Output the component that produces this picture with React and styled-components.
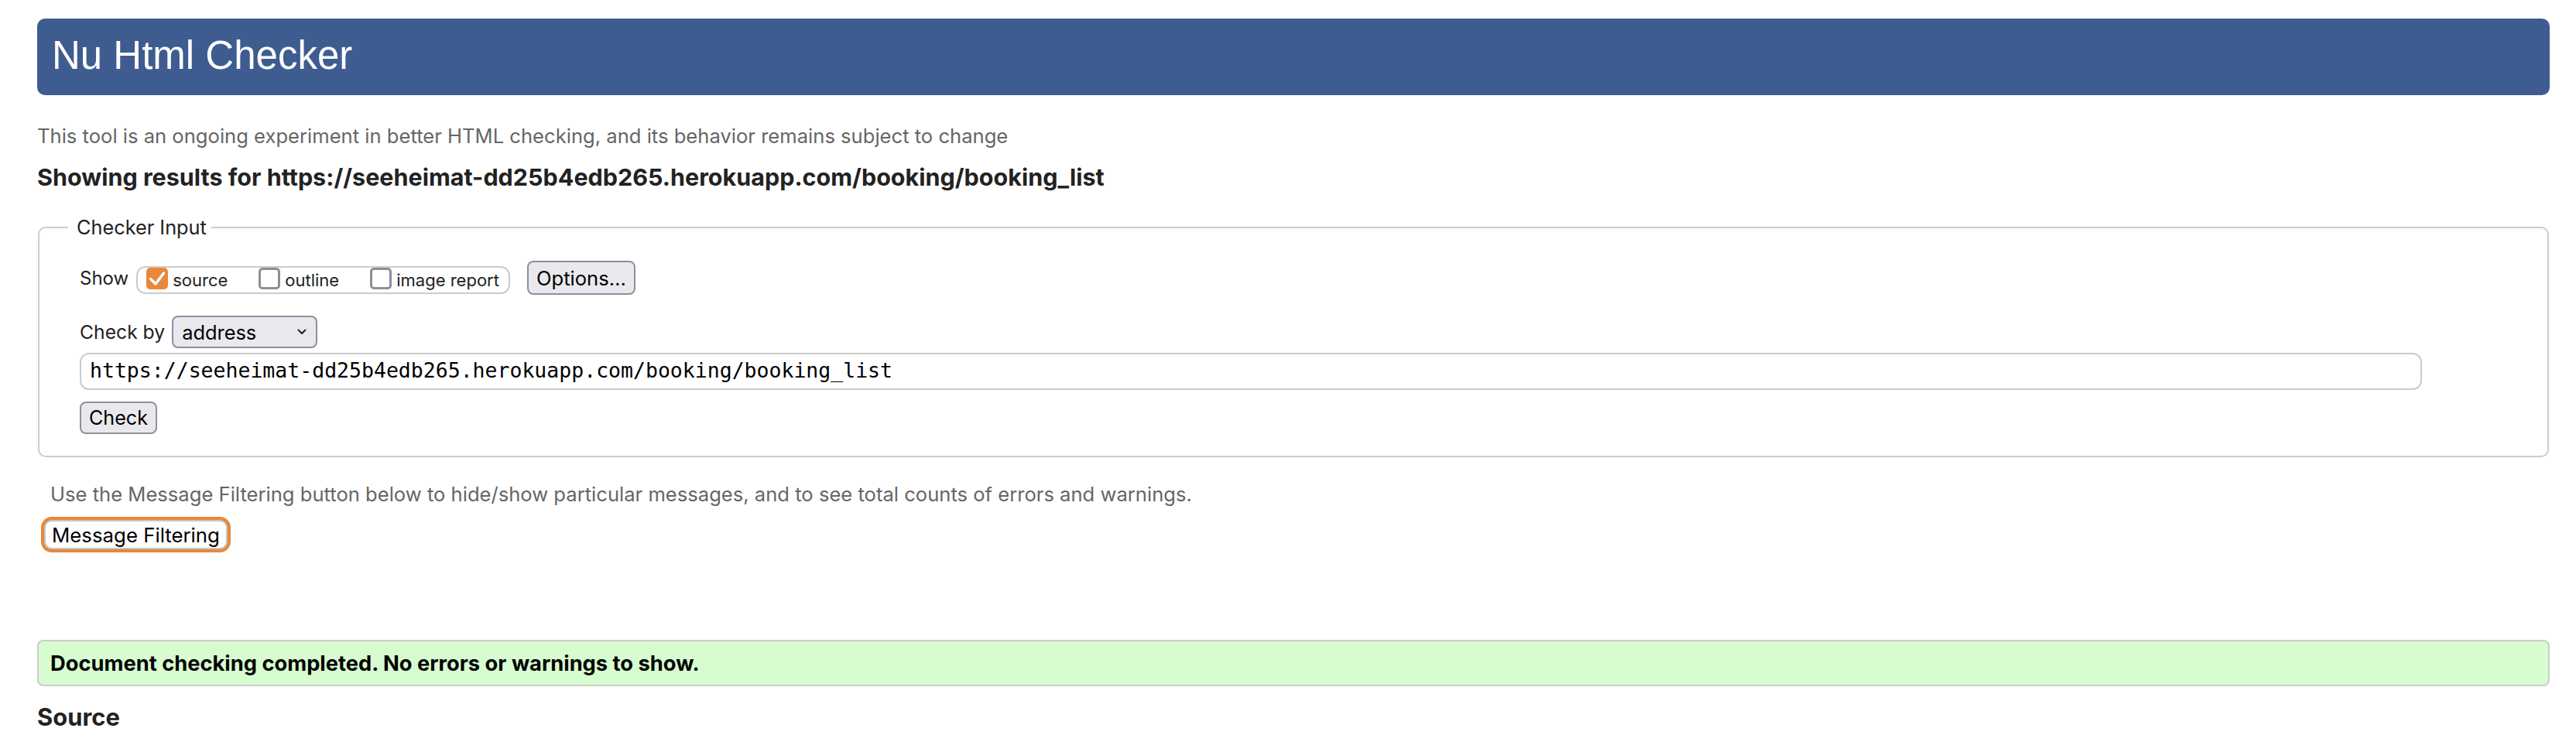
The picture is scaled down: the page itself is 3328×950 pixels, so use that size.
import React from "react";
import styled, { createGlobalStyle } from "styled-components";

const SANS = `"Liberation Sans", Arial, Helvetica, sans-serif`;
const UI = `Inter, "Liberation Sans", Arial, sans-serif`;
const MONO = `"DejaVu Sans Mono", "Liberation Mono", monospace`;
const URL = "https://seeheimat-dd25b4edb265.herokuapp.com/booking/booking_list";

const GlobalStyle = createGlobalStyle`
  html, body { margin: 0; padding: 0; background: #fff; }
  body { font-family: ${UI}; color: #222; }
`;

const Page = styled.div`
  padding: 24px 34px 0 48px;
`;

const Banner = styled.header`
  height: 99px;
  box-sizing: border-box;
  background: #3e5c8f;
  border-radius: 10px;
  display: flex;
  align-items: center;
  padding: 0 19px 4px;
`;

const Title = styled.h1`
  margin: 0;
  font-family: ${SANS};
  font-size: 51px;
  line-height: 1;
  font-weight: 400;
  color: #fff;
`;

const Lead = styled.p`
  margin: ${(p) => p.$top}px 0 0;
  padding-left: ${(p) => p.$indent || 0}px;
  font-family: ${UI};
  font-size: 25.6px;
  line-height: 30px;
  color: #666;
`;

const Heading = styled.h2`
  margin: ${(p) => p.$top}px 0 0;
  font-family: ${UI};
  font-size: ${(p) => p.$size}px;
  line-height: 36px;
  font-weight: 700;
  color: #222;
`;

const Fieldset = styled.fieldset`
  margin: 32px 1px 0 1px;
  border: 2px solid #ccc;
  border-radius: 10px;
  padding: 28px 52px 28px;
  min-width: 0;
`;

const Legend = styled.legend`
  margin-left: -15px;
  padding: 0 6px 0 11px;
  font-family: ${UI};
  font-size: 25.3px;
  line-height: 30px;
  color: #222;
`;

const Row = styled.div`
  display: flex;
  align-items: center;
  margin-top: ${(p) => p.$top || 0}px;
`;

const FieldLabel = styled.span`
  font-family: ${UI};
  font-size: ${(p) => p.$size}px;
  color: #222;
  margin-right: ${(p) => p.$gap}px;
`;

const ToggleGroup = styled.div`
  display: inline-flex;
  align-items: center;
  align-self: flex-end;
  height: 36px;
  margin-bottom: 1px;
  box-sizing: border-box;
  border: 2px solid #ccc;
  border-radius: 12px;
  padding: 0 12px 0 11px;
`;

const ToggleItem = styled.label`
  display: inline-flex;
  align-items: center;
  gap: 6px;
  margin-right: ${(p) => (p.$last ? 0 : 40)}px;
`;

const Tick = styled.span`
  width: 28px;
  height: 28px;
  box-sizing: border-box;
  border-radius: 5px;
  display: inline-flex;
  align-items: center;
  justify-content: center;
  flex-shrink: 0;
  margin-bottom: 4px;
  background: ${(p) => (p.$on ? "#e8883a" : "#fff")};
  border: ${(p) => (p.$on ? "none" : "3px solid #8e8e99")};
`;

const ToggleText = styled.span`
  font-family: ${UI};
  font-size: 22px;
  color: #222;
`;

const GreyButton = styled.button`
  display: inline-flex;
  align-items: center;
  height: ${(p) => p.$h}px;
  margin-left: ${(p) => p.$left || 0}px;
  box-sizing: border-box;
  padding: 0 10px;
  background: #e9e9ed;
  border: 2px solid #8f8f9d;
  border-radius: 8px;
  font-family: ${UI};
  font-size: ${(p) => p.$size}px;
  color: #000;
`;

const SelectBox = styled.div`
  width: 188px;
  height: 42px;
  box-sizing: border-box;
  display: flex;
  align-items: center;
  justify-content: space-between;
  padding: 0 12px 0 11px;
  background: #e9e9ed;
  border: 2px solid #8f8f9d;
  border-radius: 8px;
  font-family: ${UI};
  font-size: 25.4px;
  color: #000;
`;

const UrlInput = styled.input`
  display: block;
  width: calc(100% - 110px);
  height: 48px;
  margin-top: 6px;
  box-sizing: border-box;
  padding: 0 11px 4px;
  border: 2px solid #ccc;
  border-radius: 12px;
  background: #fff;
  font-family: ${MONO};
  font-size: 26.5px;
  color: #000;
  outline: none;
`;

const ButtonRow = styled.div`
  margin-top: 15px;
`;

const FocusButton = styled.button`
  display: inline-flex;
  align-items: center;
  height: 38px;
  margin: 18px 0 0 9px;
  box-sizing: border-box;
  padding: 0 8px;
  background: #fff;
  border: 2px solid #c6c6c6;
  border-radius: 10px;
  box-shadow: 0 0 0 4px #e8883a;
  font-family: ${UI};
  font-size: 25.8px;
  color: #000;
`;

const SuccessBox = styled.div`
  margin-top: 117px;
  height: 60px;
  box-sizing: border-box;
  display: flex;
  align-items: center;
  padding: 0 15px;
  background: #d7fcd0;
  border: 2px solid #ccc;
  border-radius: 8px;
  font-family: ${UI};
  font-size: 27.3px;
  font-weight: 700;
  color: #000;
`;

function CheckMark() {
  return (
    <svg width="28" height="28" viewBox="0 0 28 28">
      <path
        d="M5.5 14.5 L12 21 L22.5 7"
        fill="none"
        stroke="#fff"
        strokeWidth="3.4"
        strokeLinecap="round"
        strokeLinejoin="round"
      />
    </svg>
  );
}

function Chevron() {
  return (
    <svg width="12" height="8" viewBox="0 0 12 8">
      <polyline
        points="1.5,1.5 6,6 10.5,1.5"
        fill="none"
        stroke="#222"
        strokeWidth="2"
        strokeLinecap="round"
        strokeLinejoin="round"
      />
    </svg>
  );
}

const toggles = [
  { label: "source", on: true },
  { label: "outline", on: false },
  { label: "image report", on: false },
];

export default function App() {
  return (
    <>
      <GlobalStyle />
      <Page>
        <Banner>
          <Title>Nu Html Checker</Title>
        </Banner>
        <Lead $top={38}>
          This tool is an ongoing experiment in better HTML checking, and its behavior remains subject to change
        </Lead>
        <Heading $top={20} $size={30.5}>
          Showing results for {URL}
        </Heading>

        <Fieldset>
          <Legend>Checker Input</Legend>
          <Row>
            <FieldLabel $size={24} $gap={10}>
              Show
            </FieldLabel>
            <ToggleGroup>
              {toggles.map((t, i) => (
                <ToggleItem key={t.label} $last={i === toggles.length - 1}>
                  <Tick $on={t.on}>{t.on && <CheckMark />}</Tick>
                  <ToggleText>{t.label}</ToggleText>
                </ToggleItem>
              ))}
            </ToggleGroup>
            <GreyButton $h={44} $left={22} $size={25.6}>
              Options…
            </GreyButton>
          </Row>
          <Row $top={27}>
            <FieldLabel $size={24.7} $gap={9}>
              Check by
            </FieldLabel>
            <SelectBox>
              <span>address</span>
              <Chevron />
            </SelectBox>
          </Row>
          <UrlInput type="url" readOnly value={URL} />
          <ButtonRow>
            <GreyButton $h={42} $size={25.1}>
              Check
            </GreyButton>
          </ButtonRow>
        </Fieldset>

        <Lead $top={33} $indent={17}>
          Use the Message Filtering button below to hide/show particular messages, and to see total counts of errors and warnings.
        </Lead>
        <FocusButton>Message Filtering</FocusButton>

        <SuccessBox>Document checking completed. No errors or warnings to show.</SuccessBox>
        <Heading $top={22} $size={30.9}>
          Source
        </Heading>
      </Page>
    </>
  );
}
